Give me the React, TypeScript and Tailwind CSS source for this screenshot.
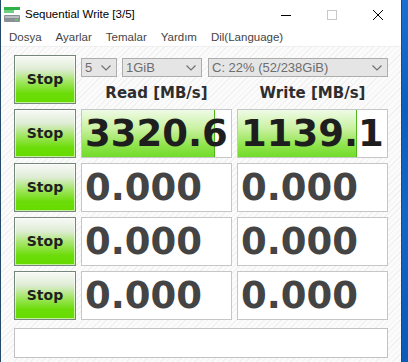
const rows = [
  { read: "3320.6", write: "1139.1", readPct: 89, writePct: 80, active: true },
  { read: "0.000", write: "0.000", readPct: 0, writePct: 0, active: false },
  { read: "0.000", write: "0.000", readPct: 0, writePct: 0, active: false },
  { read: "0.000", write: "0.000", readPct: 0, writePct: 0, active: false },
];

const menu = ["Dosya", "Ayarlar", "Temalar", "Yardım", "Dil(Language)"];

const AppIcon = () => (
  <svg width="16" height="16" viewBox="0 0 16 16">
    <rect x="0" y="0" width="16" height="3" fill="#2fb14a" />
    <rect x="0" y="3" width="10" height="3" fill="#6cd07c" />
    <rect x="0" y="8" width="16" height="7" rx="1" fill="#8a8f94" />
    <rect x="1" y="9" width="14" height="2" fill="#b9bdc1" />
    <rect x="11" y="12" width="3" height="1.5" fill="#4ee05a" />
  </svg>
);

const Chevron = () => (
  <svg width="10" height="6" viewBox="0 0 10 6" className="shrink-0">
    <path d="M0.5 0.5 L5 5 L9.5 0.5" fill="none" stroke="#6d6d6d" strokeWidth="1.1" />
  </svg>
);

const Combo = ({ label, className }: { label: string; className: string }) => (
  <div
    className={`flex h-[19px] items-center justify-between border border-[#adadad] bg-[#e5e5e5] pl-[3px] pr-[5px] text-[13px] leading-none text-[#6d6d6d] ${className}`}
  >
    <span>{label}</span>
    <Chevron />
  </div>
);

const StopButton = () => (
  <button className="flex h-[49px] w-[62px] items-center justify-center border border-[#76867a] bg-[linear-gradient(to_bottom,#f8faf6_0%,#dfecd6_28%,#a0e660_55%,#6bdc08_80%,#66db00_100%)] font-['DejaVu_Sans',sans-serif] text-[14px] font-bold text-[#1f1f1f] shadow-[inset_0_0_0_1px_rgba(255,255,255,0.6)]">
    Stop
  </button>
);

const Cell = ({ value, pct, active }: { value: string; pct: number; active: boolean }) => (
  <div className="relative flex h-[49px] items-center overflow-hidden border border-[#c6c6c6] bg-white">
    {pct > 0 && (
      <div
        className="absolute inset-y-0 left-0 border-r border-[#4fb81c] bg-[linear-gradient(to_bottom,#effbe6_0%,#c9f1a0_40%,#90e44c_75%,#72db2a_100%)]"
        style={{ width: `${pct}%` }}
      />
    )}
    <span
      className={`relative whitespace-nowrap pl-[3px] font-['DejaVu_Sans',sans-serif] text-[37px] font-bold leading-none ${
        active ? "text-[#1e1e1e]" : "text-[#444444]"
      }`}
    >
      {value}
    </span>
  </div>
);

export default function App() {
  return (
    <div className="flex h-[362px] w-[408px] overflow-hidden bg-[linear-gradient(to_bottom,#1a6fd0_0%,#0b5fbf_30%,#1466c4_60%,#0a5ab8_100%)]">
      <div className="flex w-[402px] shrink-0 flex-col border-x border-[#24496a] bg-white font-['Liberation_Sans',Arial,sans-serif]">
        {/* title bar */}
        <div className="flex h-[30px] items-center">
          <div className="ml-[3px] mr-[5px] flex items-center">
            <AppIcon />
          </div>
          <span className="text-[11.5px] text-black">Sequential Write [3/5]</span>
          <div className="ml-auto flex h-full">
            <div className="flex w-[46px] items-center justify-center">
              <div className="h-px w-[10px] bg-black" />
            </div>
            <div className="flex w-[46px] items-center justify-center">
              <div className="h-[10px] w-[10px] border border-[#c8c8c8]" />
            </div>
            <div className="flex w-[46px] items-center justify-center">
              <svg width="10" height="10" viewBox="0 0 10 10">
                <path d="M0 0 L10 10 M10 0 L0 10" stroke="#000" strokeWidth="1" />
              </svg>
            </div>
          </div>
        </div>

        {/* menu bar */}
        <div className="flex h-[17px] items-center gap-[14px] border-b border-[#efefef] pl-[8px] text-[11.5px] leading-none text-[#444]">
          {menu.map((m) => (
            <span key={m}>{m}</span>
          ))}
        </div>

        {/* body */}
        <div className="flex flex-1 flex-col bg-[repeating-linear-gradient(135deg,#fbfbfb_0px,#fbfbfb_3px,#f1f1f1_3px,#f1f1f1_4px)] px-[13px] pt-[8px]">
          <div className="grid grid-cols-[62px_151px_151px] gap-[5px]">
            <StopButton />
            <div className="col-span-2 flex flex-col">
              <div className="mt-[3px] flex">
                <Combo label="5" className="w-[36px]" />
                <Combo label="1GiB" className="ml-[5px] w-[80px]" />
                <Combo label="C: 22% (52/238GiB)" className="ml-[6px] flex-1" />
              </div>
              <div className="mt-[9px] grid grid-cols-2 gap-[5px] font-['DejaVu_Sans',sans-serif] text-[15px] font-bold leading-[15px] text-[#2e2e2e]">
                <span className="text-center">Read [MB/s]</span>
                <span className="text-center">Write [MB/s]</span>
              </div>
            </div>

            {rows.map((r, i) => (
              <div key={i} className="contents">
                <StopButton />
                <Cell value={r.read} pct={r.readPct} active={r.active} />
                <Cell value={r.write} pct={r.writePct} active={r.active} />
              </div>
            ))}
          </div>

          <div className="mt-[8px] h-[30px] border border-[#c2c2c2] bg-white" />
        </div>
      </div>
    </div>
  );
}
